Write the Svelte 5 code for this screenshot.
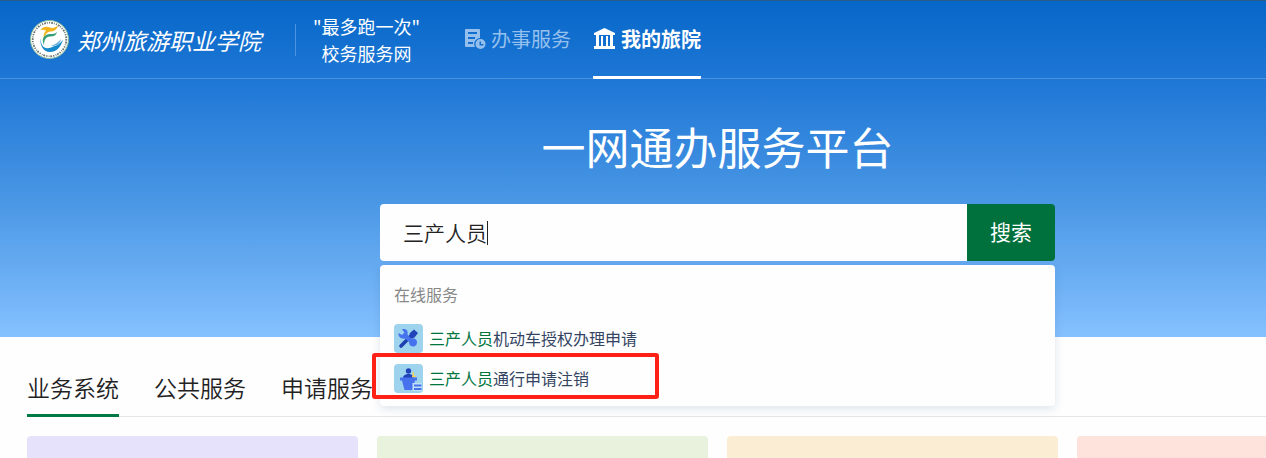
<script lang="ts">
	type Result = { id: string; icon: 'tools' | 'desk'; match: string; rest: string; marked: boolean };

	const results: Result[] = [
		{ id: 'vehicle', icon: 'tools', match: '三产人员', rest: '机动车授权办理申请', marked: false },
		{ id: 'pass', icon: 'desk', match: '三产人员', rest: '通行申请注销', marked: true }
	];
	const tabs = ['业务系统', '公共服务', '申请服务'];
	const cards = ['violet', 'green', 'amber', 'rose'];

	let query = $state('三产人员');
	let activeTab = $state(0);
</script>

<div class="page">
	<div class="hero">
		<header>
			<a class="brand" href="#home">
				<svg class="emblem" viewBox="0 0 39 39" aria-hidden="true">
					<circle cx="19.5" cy="19.5" r="19" fill="#fff" stroke="#8ebc9b" />
					<circle cx="19.5" cy="19.5" r="16.8" fill="none" stroke="#67756f" stroke-width="1.800" stroke-dasharray="1.200 1.100 1.800 .9 .8 1.300" />
					<path d="M10 11c2-4 6-5 10-3.500 3 1 5 0 8-2-1 4-4 6-8 6-3 .5-5 3-6 7-1-3 0-6 2-8-3-1-5-1-6 .5z" fill="#f2b51d" />
					<path d="M14 25c-3-6 0-11 6-11 3 0 5 0 7-2-1 4-4 4.500-7 4.500-4 0-6 3.500-6 8.500z" fill="#35a078" />
					<path d="M11 18c-1 8 4 12 10 9.500 5-2 9-3 12-8-2 8-7 12.500-13 12.500-7 0-11-8-9-14z" fill="#1688cc" />
					<path d="M21 26c4-2 7-3 10-7-1 5-4 7-10 7z" fill="#69b0dd" />
				</svg>
				<span class="school">郑州旅游职业学院</span>
			</a>
			<span class="divider"></span>
			<p class="slogan">"最多跑一次"<br />校务服务网</p>
			<nav>
				<a href="#services">
					<svg width="21" height="20" viewBox="0 0 21 20" aria-hidden="true">
						<path fill="currentColor" fill-rule="evenodd" d="M1 0h13a1 1 0 0 1 1 1v8a6 6 0 0 0-5 9H1a1 1 0 0 1-1-1V1a1 1 0 0 1 1-1zm2 3v2h9V3zm0 5v2h7V8zm0 5v2h5v-2z" />
						<path fill="currentColor" fill-rule="evenodd" d="M15.500 10a5 5 0 1 1 0 10 5 5 0 0 1 0-10zm-1 2.500v4h4V15H16v-2.500z" />
					</svg>
					办事服务
				</a>
				<a class="current" href="#mine" aria-current="page">
					<svg width="23" height="21" viewBox="0 0 23 21" aria-hidden="true">
						<path fill="currentColor" d="M11.500 0 22 5v2H1V5zM3 7h3v11H3zm5 1h2v10H8zm5 0h2v10h-2zm4-1h3v11h-3zM1 18h21v3H1z" />
					</svg>
					我的旅院
				</a>
			</nav>
		</header>

		<section class="finder">
			<h1>一网通办服务平台</h1>
			<form role="search" onsubmit={(e) => e.preventDefault()}>
				<label class="field">
					<input type="text" aria-label="搜索" autocomplete="off" bind:value={query} />
					<span class="caret"></span>
				</label>
				<button type="submit">搜索</button>
				<div class="dropdown">
					<h2>在线服务</h2>
					<ul>
						{#each results as result (result.id)}
							<li class:marked={result.marked}>
								<a href="#{result.id}">
									<svg width="29" height="29" viewBox="0 0 29 29" aria-hidden="true">
										<rect width="29" height="29" rx="4" fill="#9dd3ec" />
										{#if result.icon === 'tools'}
											<path d="M7 22 18 11" stroke="#1d3faf" stroke-width="3.600" stroke-linecap="round" />
											<path d="m16 9 4-3.500 4 3.500-3.500 4.500-3 1-2.500-2.500z" fill="#2143b9" />
											<path d="M8 5.500c4-1.500 6.500 1.500 5.500 5l3.500 4c4-1.500 7.500 2 5.500 6-2 3.500-7.500 2.500-7.500-2.500l-4-3.500C7 15.500 4 12.500 4.500 9L8 11l2.500-2.500z" fill="#4673ed" />
										{:else}
											<circle cx="14.500" cy="7" r="2.700" fill="#2143b9" />
											<path d="M9 14c0-3 3-4 5.500-4s5 1 5 4z" fill="#2143b9" />
											<path d="M19.500 13c0-2-1-3 0-5M18 12.500h4" stroke="#f3d25b" stroke-width="1.500" />
											<path d="M6 13.500h17v3h-2L18.500 26h-8L8 16.500H6z" fill="#4673ed" />
											<path d="M18.500 19H28v8h-9.500z" fill="#bfe1f6" />
											<path d="M20 21.500h7.500M20 25h7.500" stroke="#4673ed" stroke-width="2" />
										{/if}
									</svg>
									<span><em>{result.match}</em>{result.rest}</span>
								</a>
							</li>
						{/each}
					</ul>
				</div>
			</form>
		</section>
	</div>

	<main>
		<div class="tabs" role="tablist">
			{#each tabs as tab, i}
				<button type="button" role="tab" aria-selected={activeTab === i} onclick={() => (activeTab = i)}>
					{tab}
				</button>
			{/each}
		</div>
		<div class="cards">
			{#each cards as tone}
				<div class="card {tone}"></div>
			{/each}
		</div>
	</main>
</div>

<style>
	:global(body) {
		margin: 0;
	}

	.page {
		display: flex;
		flex-direction: column;
		min-height: 100vh;
		overflow: hidden;
		background: #fefefe;
		font-family: 'Noto Sans CJK SC', sans-serif;
	}

	h1,
	h2,
	p,
	ul {
		margin: 0;
		padding: 0;
	}

	a {
		color: inherit;
		text-decoration: none;
	}

	svg {
		flex: none;
		fill: none;
	}

	button,
	input {
		border: 0;
		padding: 0;
		outline: 0;
		background: none;
		font-family: inherit;
	}

	.hero {
		box-sizing: border-box;
		height: 337px;
		border-top: 1px solid #2b5b88;
		background: linear-gradient(#0667c8, #2078d6 25%, #4a97e5 60%, #85c1ff);
		color: #fff;
	}

	header {
		display: flex;
		align-items: center;
		height: 77px;
		padding-left: 30px;
		border-bottom: 1px solid #4b91dc;
		white-space: nowrap;
	}

	.brand {
		display: flex;
		align-items: center;
		gap: 8px;
	}

	.emblem {
		width: 39px;
		height: 39px;
	}

	.school {
		font-size: 23px;
		font-style: italic;
		line-height: 32px;
	}

	.divider {
		width: 1px;
		height: 32px;
		margin: 0 17px 0 34px;
		background: #4d94df;
	}

	.slogan {
		font-size: 18px;
		line-height: 27px;
		text-align: center;
	}

	nav {
		display: flex;
		align-self: stretch;
		gap: 22px;
		margin-left: 45px;
		font-size: 20px;
	}

	nav a {
		display: flex;
		align-items: center;
		gap: 5px;
		height: 75px;
		border-bottom: 3px solid transparent;
		color: #95c0ed;
	}

	nav .current {
		border-color: #fff;
		border-radius: 1px;
		color: #fff;
		font-weight: 700;
	}

	.finder {
		padding: 35px 211px 0 380px;
	}

	h1 {
		font-size: 44px;
		font-weight: 400;
		line-height: 64px;
		text-align: center;
		white-space: nowrap;
	}

	form {
		position: relative;
		display: flex;
		height: 57px;
		margin-top: 26px;
	}

	.field {
		display: flex;
		flex: 1;
		align-items: center;
		padding-left: 23px;
		border-radius: 4px 0 0 4px;
		background: #fefefe;
		cursor: text;
	}

	input {
		field-sizing: content;
		padding-bottom: 2px;
		color: #222;
		font-size: 21px;
		font-weight: 350;
		line-height: 30px;
		caret-color: transparent;
	}

	.caret {
		width: 1px;
		height: 24px;
		background: #222;
	}

	form button {
		width: 88px;
		padding-bottom: 4px;
		border-radius: 0 4px 4px 0;
		background: #00703c;
		color: #fff;
		font-size: 21px;
	}

	.dropdown {
		position: absolute;
		top: 61px;
		right: 0;
		left: 0;
		z-index: 1;
		box-sizing: border-box;
		padding: 17px 14px 8px;
		border-radius: 4px;
		background: #fefefe;
		box-shadow: 0 3px 10px rgba(30, 70, 120, 0.14);
		font-size: 16px;
		line-height: 24px;
	}

	h2 {
		margin-bottom: 12px;
		color: #888;
		font-size: 16px;
		font-weight: 400;
	}

	li {
		position: relative;
		list-style: none;
	}

	li a {
		display: flex;
		align-items: center;
		gap: 6px;
		height: 40px;
		color: #344563;
	}

	em {
		color: #00763f;
		font-style: normal;
	}

	.marked::after {
		content: '';
		position: absolute;
		top: -5px;
		left: -22px;
		box-sizing: border-box;
		width: 287px;
		height: 46px;
		border: 4px solid #ff2116;
		border-radius: 3px;
		pointer-events: none;
	}

	main {
		display: flex;
		flex: 1;
		flex-direction: column;
		padding: 32px 0 0 27px;
	}

	.tabs {
		display: flex;
		gap: 35px;
		border-bottom: 1px solid #e6e6e6;
	}

	.tabs button {
		height: 48px;
		margin-bottom: -1px;
		padding-bottom: 10px;
		border-bottom: 3px solid transparent;
		color: #222;
		font-size: 23px;
		font-weight: 350;
		line-height: 32px;
		white-space: nowrap;
	}

	.tabs [aria-selected='true'] {
		border-color: #007a45;
	}

	.cards {
		display: grid;
		flex: 1;
		grid-template-columns: repeat(4, minmax(331px, 1fr));
		gap: 19px;
		min-height: 22px;
		padding-top: 19px;
	}

	.card {
		border-radius: 4px 4px 0 0;
	}

	.violet {
		background: #e6e2fc;
	}

	.green {
		background: #e8f2dc;
	}

	.amber {
		background: #faedd3;
	}

	.rose {
		background: #fee3dd;
	}
</style>
